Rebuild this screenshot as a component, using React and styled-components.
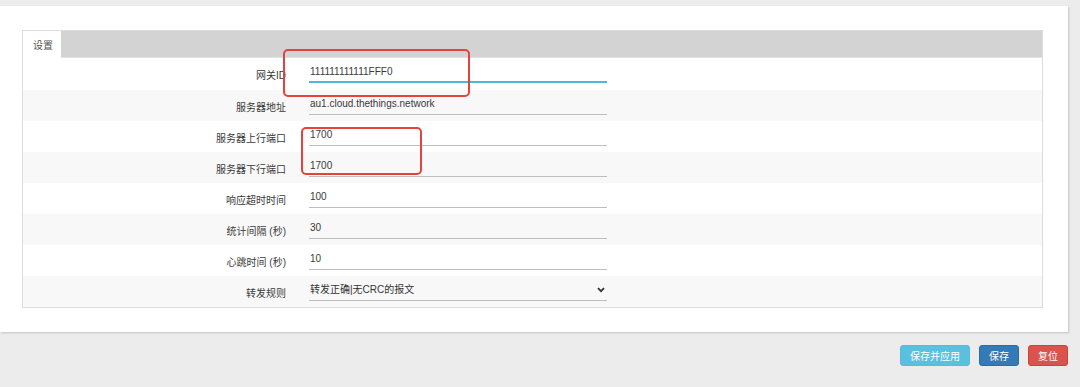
import React from 'react';
import styled, { createGlobalStyle } from 'styled-components';

const GlobalStyle = createGlobalStyle`
  html, body {
    margin: 0;
    padding: 0;
    background: #ececec;
  }
  body {
    font-family: "Liberation Sans", "Noto Sans CJK SC", sans-serif;
    color: #444;
  }
`;

const Page = styled.div`
  padding-top: 6px;
  width: 1080px;
  height: 381px;
`;

const Panel = styled.div`
  position: relative;
  width: 1068px;
  box-sizing: border-box;
  padding: 24px 25px 24px 22px;
  background: #fff;
  box-shadow: 1px 1px 2px rgba(0, 0, 0, 0.18);
`;

const Fieldset = styled.div`
  border: 1px solid #dcdcdc;
  background: #fff;
`;

const TabBar = styled.div`
  display: flex;
  height: 26px;
  background: #d3d3d3;
  border-bottom: 1px solid #e2e2e2;
`;

const Tab = styled.div`
  display: flex;
  align-items: center;
  width: 38px;
  height: 27px;
  padding-left: 10px;
  box-sizing: border-box;
  background: #fff;
  font-size: 10px;
  color: #555;
`;

const Row = styled.div`
  display: grid;
  grid-template-columns: 263px 298px;
  column-gap: 23px;
  align-items: center;
  height: ${(p) => p.$height || 31}px;
  background: ${(p) => (p.$striped ? '#f8f8f8' : '#fff')};
`;

const Label = styled.label`
  text-align: right;
  font-size: 10px;
  color: #3a3a3a;
  margin-top: 1px;
`;

const TextInput = styled.input`
  width: 298px;
  height: 22px;
  box-sizing: border-box;
  margin-bottom: 4px;
  padding: 0 1px;
  border: none;
  border-bottom: ${(p) => (p.$focused ? '2px solid #52b6dc' : '1px solid #bdbdbd')};
  background: transparent;
  font-family: inherit;
  font-size: 10px;
  color: #3a3a3a;
  outline: none;
`;

const SelectWrap = styled.div`
  position: relative;
  width: 298px;
  margin-bottom: 4px;
`;

const Select = styled.select`
  appearance: none;
  width: 298px;
  height: 22px;
  box-sizing: border-box;
  padding: 0 1px;
  border: none;
  border-bottom: 1px solid #bdbdbd;
  border-radius: 0;
  background: transparent;
  font-family: inherit;
  font-size: 10px;
  color: #333;
  outline: none;
`;

const Chevron = styled.svg`
  position: absolute;
  right: 2px;
  top: 8px;
  pointer-events: none;
`;

const Callout = styled.div`
  position: absolute;
  left: ${(p) => p.$left}px;
  top: ${(p) => p.$top}px;
  width: ${(p) => p.$width}px;
  height: ${(p) => p.$height}px;
  box-sizing: border-box;
  border: 2px solid #e4433a;
  border-radius: 5px;
  pointer-events: none;
`;

const Actions = styled.div`
  display: flex;
  justify-content: flex-end;
  gap: 9px;
  width: 1068px;
  margin-top: 13px;
`;

const Button = styled.button`
  height: 21px;
  padding: 0 9px;
  border: 1px solid ${(p) => p.$border};
  border-radius: 3px;
  background: ${(p) => p.$bg};
  color: #fff;
  font-family: inherit;
  font-size: 10px;
  cursor: pointer;
`;

const fields = [
  { label: '网关ID', value: '111111111111FFF0', focused: true, height: 32 },
  { label: '服务器地址', value: 'au1.cloud.thethings.network' },
  { label: '服务器上行端口', value: '1700' },
  { label: '服务器下行端口', value: '1700' },
  { label: '响应超时时间', value: '100' },
  { label: '统计间隔 (秒)', value: '30' },
  { label: '心跳时间 (秒)', value: '10' },
];

export default function App() {
  return (
    <Page>
      <GlobalStyle />
      <Panel>
        <Fieldset>
          <TabBar>
            <Tab>设置</Tab>
          </TabBar>
          {fields.map((f, i) => (
            <Row key={f.label} $striped={i % 2 === 1} $height={f.height}>
              <Label>{f.label}</Label>
              <TextInput defaultValue={f.value} $focused={f.focused} />
            </Row>
          ))}
          <Row $striped>
            <Label>转发规则</Label>
            <SelectWrap>
              <Select defaultValue="crc">
                <option value="crc">转发正确|无CRC的报文</option>
                <option value="all">转发所有报文</option>
              </Select>
              <Chevron width="8" height="6" viewBox="0 0 8 6">
                <path d="M1 1.2 L4 4.2 L7 1.2" fill="none" stroke="#333" strokeWidth="1.8" />
              </Chevron>
            </SelectWrap>
          </Row>
        </Fieldset>
        <Callout $left={283} $top={43} $width={187} $height={48} />
        <Callout $left={301} $top={121} $width={121} $height={48} />
      </Panel>
      <Actions>
        <Button $bg="#5bc0de" $border="#56bcd9">保存并应用</Button>
        <Button $bg="#337ab7" $border="#2e6da4">保存</Button>
        <Button $bg="#d9534f" $border="#d43f3a">复位</Button>
      </Actions>
    </Page>
  );
}
